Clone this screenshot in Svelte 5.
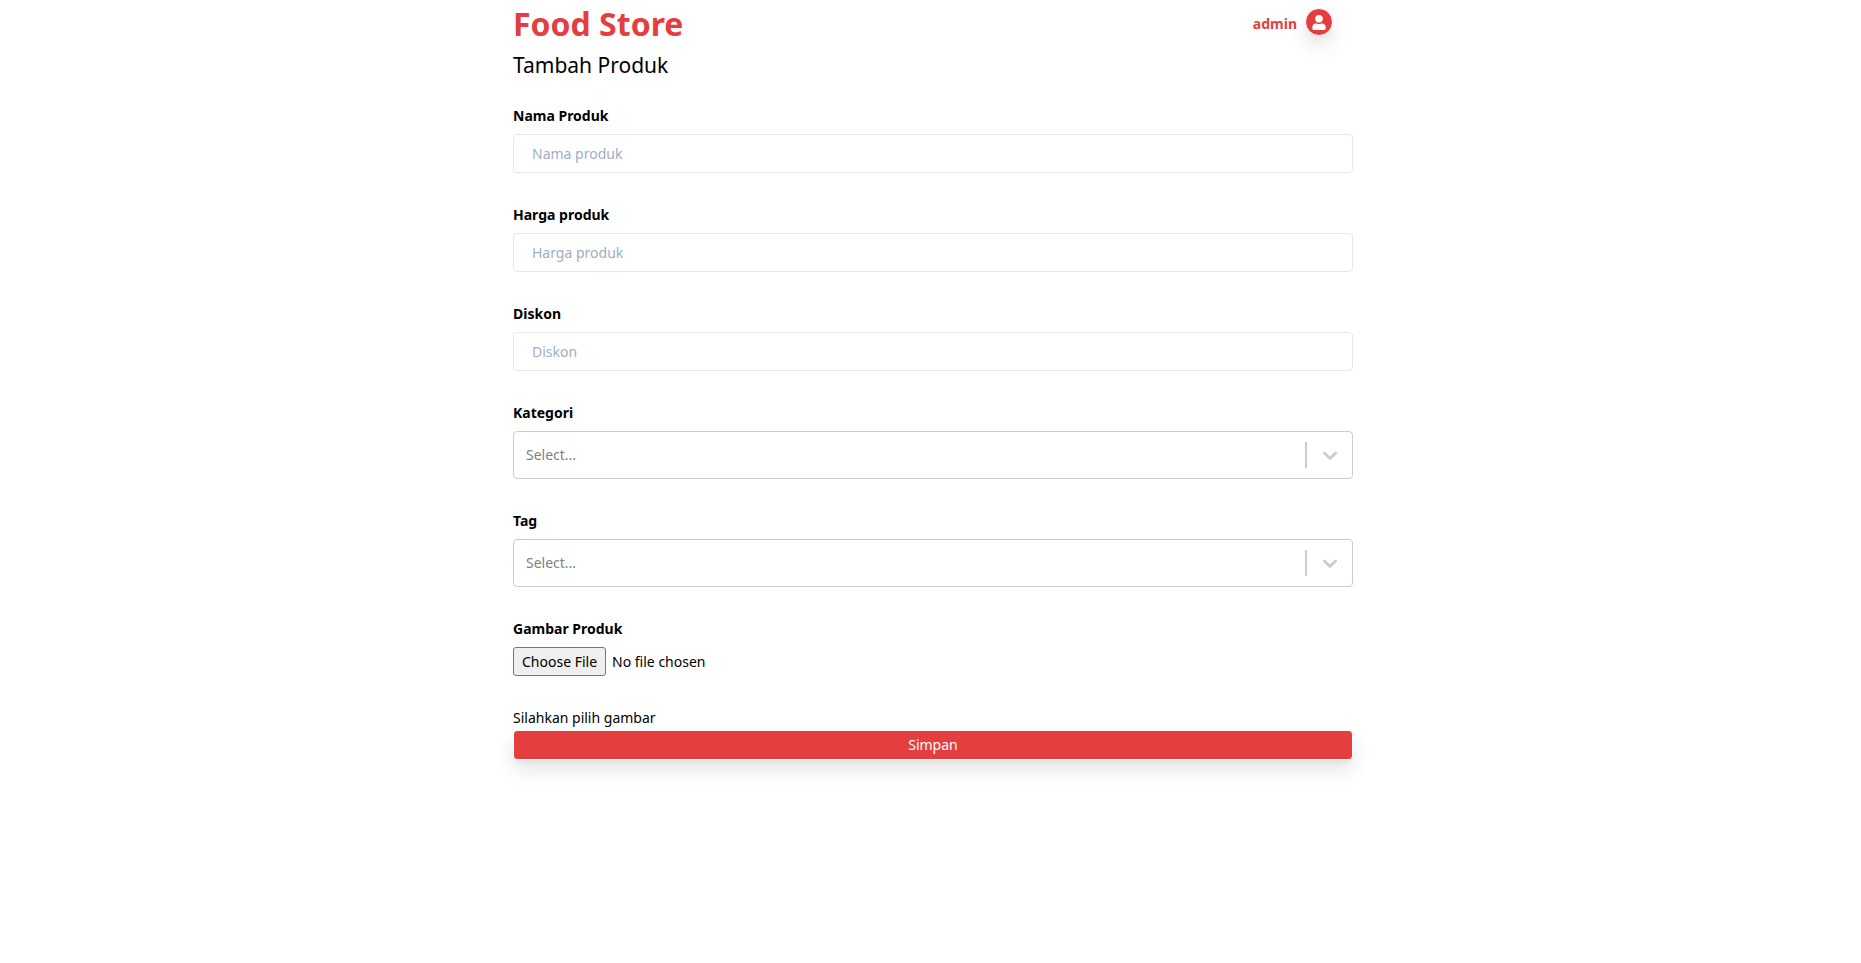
<script>
  const textFields = [
    { id: 'name', label: 'Nama Produk', placeholder: 'Nama produk' },
    { id: 'price', label: 'Harga produk', placeholder: 'Harga produk' },
    { id: 'discount', label: 'Diskon', placeholder: 'Diskon' }
  ];
  const selectFields = [
    { id: 'category', label: 'Kategori' },
    { id: 'tag', label: 'Tag' }
  ];
</script>

<div class="layout">
  <header class="topbar">
    <h1>Food Store</h1>
    <a class="account" href="#account">
      <span>admin</span>
      <span class="avatar">
        <svg viewBox="0 0 26 26" aria-hidden="true">
          <circle cx="13" cy="9.8" r="3.8" />
          <path d="M6.3 18.6c0-2.8 1.5-4.2 3.7-4.2.9 0 1.6.5 3 .5s2.1-.5 3-.5c2.200 0 3.700 1.400 3.700 4.200v.7c0 .9-.7 1.600-1.600 1.600H7.900c-.9 0-1.600-.7-1.600-1.600z" />
        </svg>
      </span>
    </a>
  </header>

  <main>
    <h2>Tambah Produk</h2>
    <form>
      {#each textFields as field}
        <div class="field">
          <label for={field.id}>{field.label}</label>
          <input class="text" id={field.id} type="text" placeholder={field.placeholder} />
        </div>
      {/each}

      {#each selectFields as field}
        <div class="field">
          <label for={field.id}>{field.label}</label>
          <div class="select">
            <select id={field.id}>
              <option>Select...</option>
            </select>
            <span class="indicator">
              <svg viewBox="0 0 20 20" aria-hidden="true">
                <path d="M4.516 7.548c0.436-0.446 1.043-0.481 1.576 0l3.908 3.747 3.908-3.747c0.533-0.481 1.141-0.446 1.574 0 0.436 0.445 0.408 1.197 0 1.615-0.406 0.418-4.695 4.502-4.695 4.502-0.217 0.223-0.502 0.335-0.787 0.335s-0.570-0.112-0.789-0.335c0 0-4.287-4.084-4.695-4.502s-0.436-1.170 0-1.615z" />
              </svg>
            </span>
          </div>
        </div>
      {/each}

      <div class="field">
        <label for="image">Gambar Produk</label>
        <input class="file" id="image" type="file" />
      </div>

      <p>Silahkan pilih gambar</p>
      <button type="submit">Simpan</button>
    </form>
  </main>
</div>

<style>
  :global(body) {
    background: #fff;
  }

  .layout {
    box-sizing: border-box;
    max-width: 845px;
    min-height: 100vh;
    margin: 0 auto;
    padding: 0 0 48px 5px;
    color: #000;
    font: 14px/24px "Segoe UI", "Noto Sans", sans-serif;
  }

  .topbar {
    display: flex;
    justify-content: space-between;
    align-items: center;
    height: 48px;
    padding-right: 20px;
  }

  h1 {
    margin: 0;
    color: #e53e3e;
    font-size: 32px;
    line-height: 48px;
    font-weight: 700;
  }

  .account {
    display: flex;
    align-items: center;
    gap: 8px;
    color: #e53e3e;
    font-weight: 700;
    text-decoration: none;
  }

  .avatar {
    box-sizing: border-box;
    width: 28px;
    height: 28px;
    margin-bottom: 4px;
    border: 1px solid #fff;
    border-radius: 50%;
    background: #e53e3e;
    box-shadow: 0 10px 20px rgba(0, 0, 0, 0.1), 0 4px 6px -2px rgba(0, 0, 0, 0.05);
  }

  .avatar svg {
    display: block;
    fill: #fff;
  }

  h2 {
    margin: 0 0 22px;
    font-size: 21px;
    line-height: 34px;
    font-weight: 400;
  }

  .field {
    display: flex;
    flex-direction: column;
    gap: 6px;
    margin-bottom: 30px;
  }

  label {
    font-weight: 700;
  }

  input,
  select,
  button {
    box-sizing: border-box;
    font: inherit;
  }

  .text {
    width: 100%;
    height: 39px;
    padding: 0 18px;
    border: 1px solid #e2e8f0;
    border-radius: 4px;
    background: #fff;
  }

  .text::placeholder {
    color: #a0aec0;
    opacity: 1;
  }

  .select {
    display: grid;
    grid-template-columns: 1fr 47px;
    align-items: center;
    height: 46px;
    border: 1px solid #ccc;
    border-radius: 4px;
  }

  select {
    grid-area: 1 / 1 / 2 / 3;
    width: 100%;
    height: 100%;
    padding: 0 12px;
    border: 0;
    border-radius: 4px;
    background: transparent;
    color: #808080;
    appearance: none;
  }

  .indicator {
    grid-area: 1 / 2;
    display: flex;
    justify-content: center;
    align-items: center;
    height: 26px;
    border-left: 2px solid #ccc;
    pointer-events: none;
  }

  .indicator svg {
    width: 24px;
    height: 24px;
    fill: #ccc;
  }

  .file {
    width: 100%;
    height: 29px;
  }

  .file::file-selector-button {
    box-sizing: border-box;
    height: 29px;
    margin: 0 6px 0 0;
    padding: 0 8px;
    border: 1px solid #767676;
    border-radius: 3px;
    background: #efefef;
    color: #000;
    font: inherit;
  }

  p {
    margin: 0;
  }

  button {
    display: block;
    width: 100%;
    height: 30px;
    padding: 0;
    border: 1px solid #fff;
    border-radius: 4px;
    background: #e53e3e;
    color: #fff;
    box-shadow: 0 10px 20px rgba(0, 0, 0, 0.1), 0 4px 6px -2px rgba(0, 0, 0, 0.05);
  }
</style>
